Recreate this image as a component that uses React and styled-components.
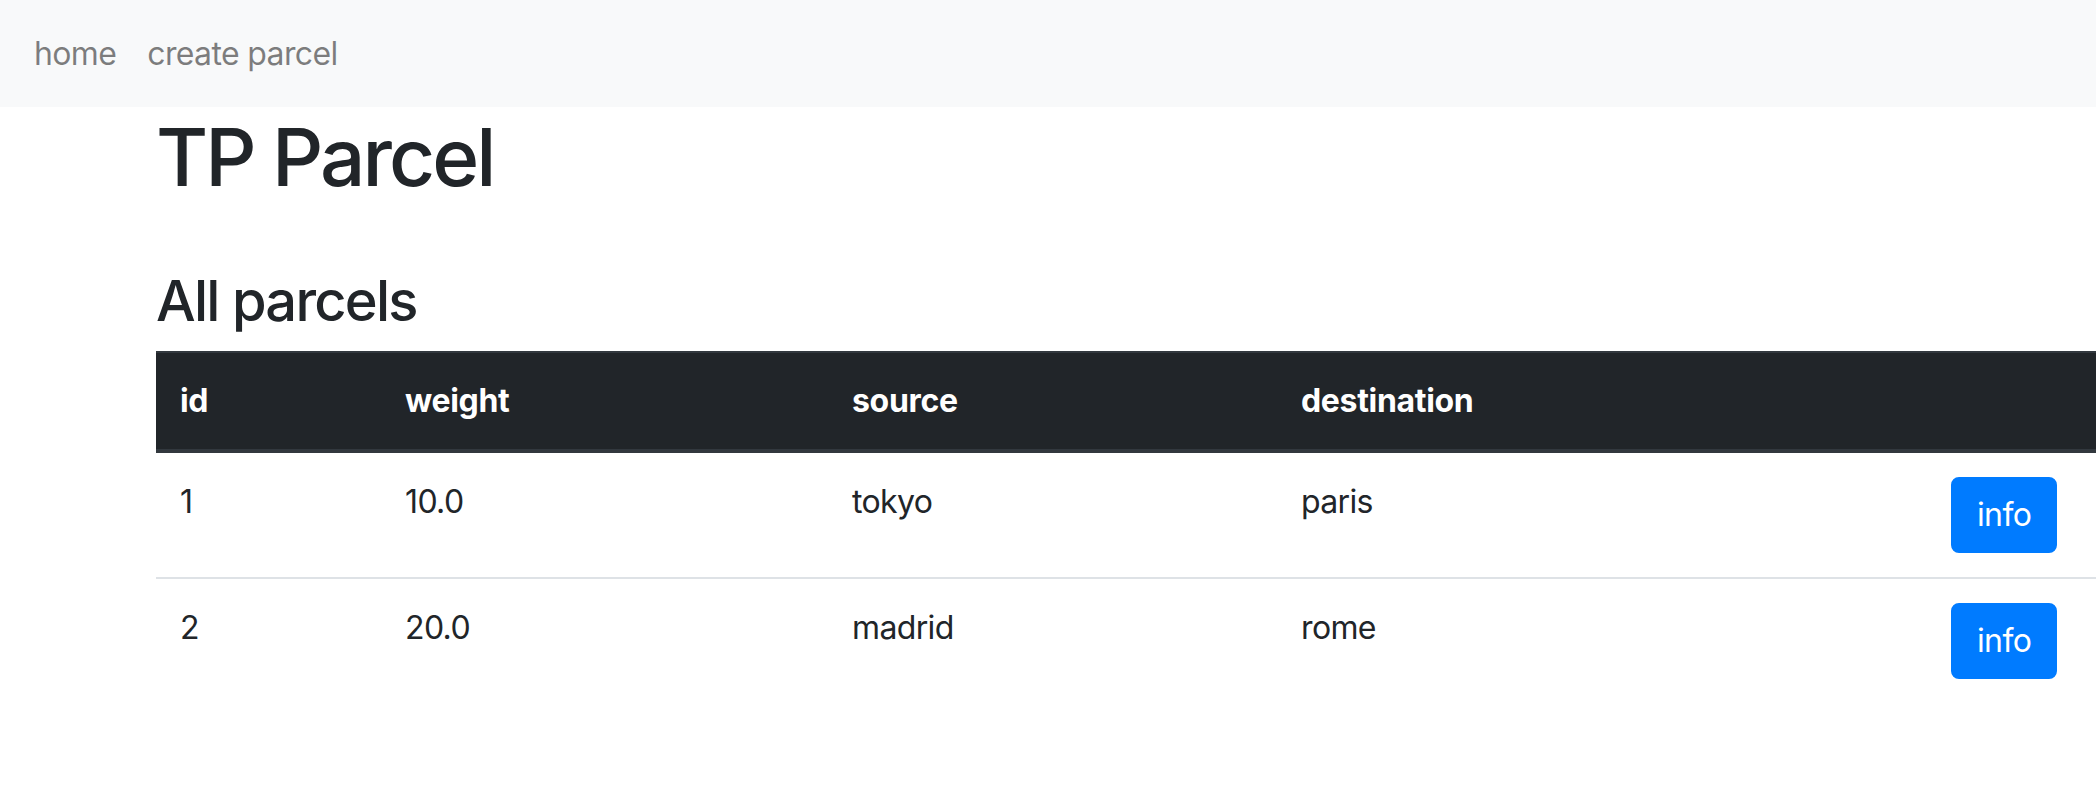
import React from "react";
import styled, { createGlobalStyle } from "styled-components";

const GlobalStyle = createGlobalStyle`
  html, body {
    margin: 0;
    padding: 0;
    background: #ffffff;
    overflow: hidden;
  }
  body {
    font-family: Inter, "Noto Sans", "Liberation Sans", sans-serif;
    color: #212529;
    font-size: 32px;
    line-height: 1.5;
    letter-spacing: -0.02em;
  }
  * { box-sizing: border-box; }
`;

const Page = styled.div`
  width: 2096px;
  min-height: 806px;
  overflow: hidden;
`;

const Navbar = styled.nav`
  display: flex;
  align-items: center;
  gap: 31px;
  height: 107px;
  padding: 0 34px;
  background: #f8f9fa;
`;

const NavLink = styled.a`
  color: rgba(0, 0, 0, 0.5);
  text-decoration: none;
  font-size: 32px;
  line-height: 48px;
  white-space: nowrap;
`;

const Container = styled.main`
  padding-left: 156px;
`;

const Title = styled.h1`
  margin: 2px 0 63px;
  font-size: 80px;
  font-weight: 500;
  line-height: 1.2;
  letter-spacing: -0.037em;
`;

const SectionTitle = styled.h3`
  margin: 0 0 16px;
  font-size: 56px;
  font-weight: 500;
  line-height: 1.2;
  letter-spacing: -0.031em;
`;

const Table = styled.table`
  width: 2220px;
  table-layout: fixed;
  border-collapse: collapse;
`;

const HeadCell = styled.th`
  padding: 24px;
  text-align: left;
  vertical-align: bottom;
  font-weight: 700;
  line-height: 48px;
  letter-spacing: -0.01em;
  color: #ffffff;
  background: #212529;
  border-top: 2px solid #32383e;
  border-bottom: 4px solid #32383e;
`;

const Cell = styled.td`
  padding: 25px 24px 24px;
  vertical-align: top;
  line-height: 48px;
  border-top: 2px solid #dee2e6;
`;

const InfoButton = styled.button`
  display: inline-block;
  margin-top: -1px;
  font-family: inherit;
  font-size: 32px;
  line-height: 48px;
  letter-spacing: -0.02em;
  padding: 12px 24px;
  color: #ffffff;
  background: #007bff;
  border: 2px solid #007bff;
  border-radius: 8px;
  cursor: pointer;
`;

const columns = [225, 447, 449, 650, 449];
const headers = ["id", "weight", "source", "destination", ""];
const parcels = [
  { id: 1, weight: "10.0", source: "tokyo", destination: "paris" },
  { id: 2, weight: "20.0", source: "madrid", destination: "rome" },
];

export default function App() {
  return (
    <Page>
      <GlobalStyle />
      <Navbar>
        <NavLink href="#">home</NavLink>
        <NavLink href="#">create parcel</NavLink>
      </Navbar>
      <Container>
        <Title>TP Parcel</Title>
        <SectionTitle>All parcels</SectionTitle>
        <Table>
          <colgroup>
            {columns.map((w, i) => (
              <col key={i} style={{ width: w }} />
            ))}
          </colgroup>
          <thead>
            <tr>
              {headers.map((h, i) => (
                <HeadCell key={i}>{h}</HeadCell>
              ))}
            </tr>
          </thead>
          <tbody>
            {parcels.map((p) => (
              <tr key={p.id}>
                <Cell>{p.id}</Cell>
                <Cell>{p.weight}</Cell>
                <Cell>{p.source}</Cell>
                <Cell>{p.destination}</Cell>
                <Cell>
                  <InfoButton>info</InfoButton>
                </Cell>
              </tr>
            ))}
          </tbody>
        </Table>
      </Container>
    </Page>
  );
}
